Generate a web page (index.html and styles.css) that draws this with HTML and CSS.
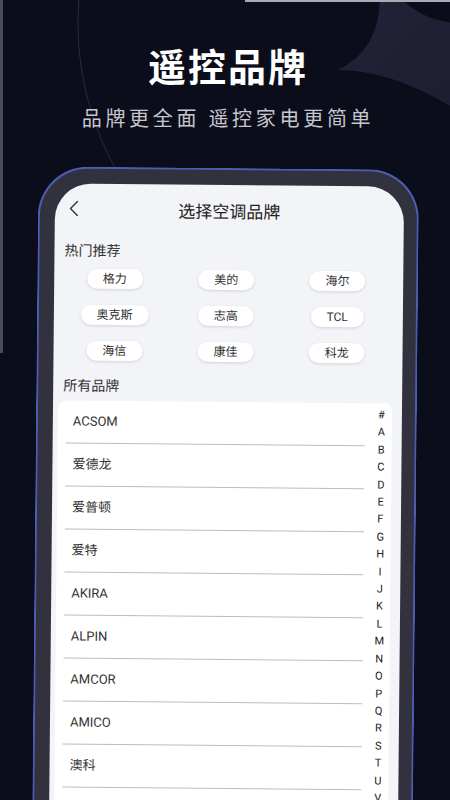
FILE: index.html
```html
<!DOCTYPE html>
<html lang="zh">
<head>
<meta charset="utf-8">
<title>遥控品牌</title>
<link rel="stylesheet" href="styles.css">
</head>
<body>
<div class="page">
  <svg class="deco" width="450" height="360" viewBox="0 0 450 360" aria-hidden="true">
    <defs>
      <linearGradient id="starg" x1="0" y1="0" x2="1" y2="1">
        <stop offset="0" stop-color="#23243a"/>
        <stop offset="1" stop-color="#171828"/>
      </linearGradient>
    </defs>
    <path d="M79 -2 A300 300 0 0 0 122 180" fill="none" stroke="#2a2b3b" stroke-width="1"/>
    <path d="M338 70 Q400 40 370 -60 L620 -60 L620 220 L500 140 Q410 70 338 70 Z" fill="url(#starg)"/>
    <circle cx="460" cy="-60" r="83" fill="#0b0c19"/>
    <rect x="245" y="0" width="205" height="2" fill="#a9aab2"/>
    <rect x="0" y="0" width="3" height="353" fill="#4a4b56"/>
  </svg>

  <header class="hero">
    <h1 class="hero-title">遥控品牌</h1>
    <p class="hero-sub">品牌更全面 遥控家电更简单</p>
  </header>

  <div class="phone">
    <div class="screen">
      <div class="topbar">
        <span class="back">
          <svg width="10" height="16" viewBox="0 0 10 16"><path d="M8.5 1 L1.6 8 L8.5 15" fill="none" stroke="#333" stroke-width="1.4" stroke-linecap="round" stroke-linejoin="round"/></svg>
        </span>
        <span class="topbar-title">选择空调品牌</span>
        <span></span>
      </div>

      <h2 class="section-title">热门推荐</h2>
      <div class="chips">
        <div class="chip-cell"><span class="chip">格力</span></div>
        <div class="chip-cell"><span class="chip">美的</span></div>
        <div class="chip-cell"><span class="chip">海尔</span></div>
        <div class="chip-cell"><span class="chip">奥克斯</span></div>
        <div class="chip-cell"><span class="chip">志高</span></div>
        <div class="chip-cell"><span class="chip">TCL</span></div>
        <div class="chip-cell"><span class="chip">海信</span></div>
        <div class="chip-cell"><span class="chip">康佳</span></div>
        <div class="chip-cell"><span class="chip">科龙</span></div>
      </div>

      <h2 class="section-title section-title-all">所有品牌</h2>
      <div class="card">
        <ul class="brand-list">
          <li class="brand">ACSOM</li>
          <li class="brand">爱德龙</li>
          <li class="brand">爱普顿</li>
          <li class="brand">爱特</li>
          <li class="brand">AKIRA</li>
          <li class="brand">ALPIN</li>
          <li class="brand">AMCOR</li>
          <li class="brand">AMICO</li>
          <li class="brand">澳科</li>
        </ul>
        <ul class="index">
          <li>#</li><li>A</li><li>B</li><li>C</li><li>D</li><li>E</li><li>F</li><li>G</li><li>H</li><li>I</li><li>J</li><li>K</li><li>L</li><li>M</li><li>N</li><li>O</li><li>P</li><li>Q</li><li>R</li><li>S</li><li>T</li><li>U</li><li>V</li>
        </ul>
      </div>
    </div>
  </div>
</div>
</body>
</html>
```

FILE: styles.css
```css
html, body {
  margin: 0;
  padding: 0;
  background: #0c0d1b;
}

body {
  font-family: Roboto, "Noto Sans CJK SC", sans-serif;
}

.page {
  position: relative;
  width: 450px;
  height: 800px;
  overflow: hidden;
  background: #0c0d1b;
}

.deco {
  position: absolute;
  left: 0;
  top: 0;
  z-index: 0;
}

.hero {
  position: relative;
  z-index: 1;
  padding: 42px 0 0 6px;
  text-align: center;
}

.hero-title {
  margin: 0;
  font-family: "Noto Sans CJK SC", sans-serif;
  font-size: 38px;
  line-height: 46px;
  font-weight: 700;
  letter-spacing: 2px;
  color: #ffffff;
}

.hero-sub {
  margin: 16px 0 0;
  font-family: "Noto Sans CJK SC", sans-serif;
  font-size: 20px;
  line-height: 28px;
  letter-spacing: 3.7px;
  color: #c6c7cd;
}

.phone {
  position: relative;
  z-index: 1;
  box-sizing: border-box;
  width: 381px;
  height: 700px;
  margin: 36px 0 0 36px;
  padding: 15px 13px 0 15px;
  border: 2px solid #4d5db6;
  border-bottom: none;
  border-radius: 50px 50px 0 0;
  background: #31323e;
  transform: rotate(0.55deg);
  transform-origin: 50% 240px;
}

.screen {
  height: 680px;
  padding: 0 10px 0 5px;
  border-radius: 36px 36px 0 0;
  background: #f3f4f8;
  overflow: hidden;
}

.topbar {
  display: grid;
  grid-template-columns: 1fr auto 1fr;
  align-items: center;
  height: 50px;
  margin: 0 -10px 0 -5px;
}

.back {
  display: flex;
  align-items: center;
  padding-left: 14px;
}

.topbar-title {
  font-family: "Noto Sans CJK SC", sans-serif;
  font-size: 17px;
  color: #222;
}

.section-title {
  margin: 6px 0 0;
  padding-left: 5px;
  font-family: "Noto Sans CJK SC", sans-serif;
  font-size: 14px;
  line-height: 20px;
  font-weight: 400;
  color: #333;
}

.section-title-all {
  margin-top: 14px;
}

.chips {
  display: grid;
  grid-template-columns: repeat(3, 1fr);
  row-gap: 16px;
  margin-top: 9px;
}

.chip-cell {
  display: flex;
  justify-content: center;
}

.chip {
  display: inline-block;
  height: 20px;
  padding: 0 16px;
  border-radius: 10px;
  background: #ffffff;
  box-shadow: 0 1px 3px rgba(0, 0, 0, 0.14);
  font-size: 12px;
  line-height: 20px;
  color: #333;
}

.card {
  display: flex;
  margin-top: 6px;
  border-radius: 8px;
  background: #ffffff;
  overflow: hidden;
  height: 420px;
}

.brand-list {
  flex: 1;
  margin: 0;
  padding: 0 0 0 8px;
  list-style: none;
}

.brand {
  height: 42px;
  padding-left: 7px;
  border-bottom: 1px solid #bcbcbc;
  font-size: 13px;
  line-height: 42px;
  color: #333;
}

.index {
  width: 21px;
  margin: 0;
  padding: 3px 0 0 6px;
  list-style: none;
  text-align: center;
  font-family: Roboto, sans-serif;
  font-size: 11px;
  line-height: 17.4px;
  color: #222;
}
```
